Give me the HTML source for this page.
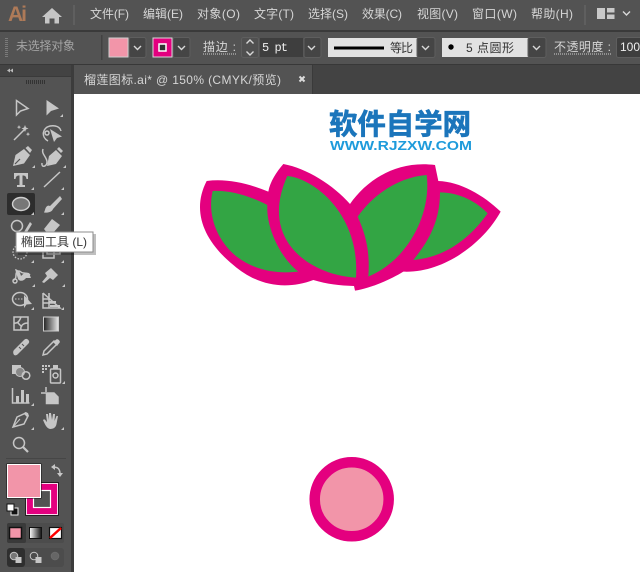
<!DOCTYPE html>
<html><head><meta charset="utf-8">
<style>
html,body{margin:0;padding:0;background:#535353;width:640px;height:572px;overflow:hidden}
svg{display:block}
text{font-family:"Liberation Sans","Noto Sans CJK SC",sans-serif;font-size:12px;fill:#d6d6d6}
.i{fill:none;stroke:#c6c6c6;stroke-width:1.5}
.f{fill:#c6c6c6;stroke:none}
.c{fill:none;stroke:#d8d8d8;stroke-width:1.4}
.d{fill:#454545;stroke:#5e5e5e}
</style></head><body>
<svg width="640" height="572" viewBox="0 0 640 572" xmlns="http://www.w3.org/2000/svg">
<rect width="640" height="572" fill="#535353"/>
<!-- menu bar -->
<text x="8" y="21" style="font-size:21px;font-weight:bold;fill:#ae7a58" textLength="19">Ai</text>
<path class="f" d="M52 8L62 17H59V23.500H54.500V18.500H49.500V23.500H45V17H42Z"/>
<rect x="73" y="5" width="2" height="20" fill="#5f5f5f"/>
<g>
<text x="90" y="18" textLength="39">文件(F)</text>
<text x="143" y="18" textLength="40">编辑(E)</text>
<text x="197" y="18" textLength="43">对象(O)</text>
<text x="254" y="18" textLength="40">文字(T)</text>
<text x="308" y="18" textLength="40">选择(S)</text>
<text x="362" y="18" textLength="40">效果(C)</text>
<text x="417" y="18" textLength="41">视图(V)</text>
<text x="472" y="18" textLength="45">窗口(W)</text>
<text x="531" y="18" textLength="42">帮助(H)</text>
</g>
<rect x="584" y="5" width="2" height="20" fill="#5f5f5f"/>
<path d="M597 8H605V19H597ZM607 8H614.500V12.500H607ZM607 14.500H614.500V19H607Z" fill="#c9c9c9"/>
<path class="c" d="M623 11.500L626.500 15L630 11.500" />
<rect y="30" width="640" height="2" fill="#3a3a3a"/>
<!-- options bar -->
<path d="M6.500 38V57" stroke="#7a7a7a" stroke-width="3" stroke-dasharray="1 1"/>
<text x="16" y="50" textLength="59" style="fill:#a4a4a4">未选择对象</text>
<rect x="101" y="35" width="1.500" height="25" fill="#424242"/>
<rect x="129" y="37.500" width="17" height="20" rx="2" class="d"/>
<rect x="109" y="38" width="19" height="19" fill="#f295a9" stroke="#cfcfcf"/>
<path class="c" d="M134 46L137.500 49.500L141 46"/>
<rect x="173" y="37.500" width="17" height="20" rx="2" class="d"/>
<rect x="153" y="38" width="19" height="19" fill="#e4007f" stroke="#d8d8d8"/>
<rect x="159" y="44" width="7" height="7" fill="#333" stroke="#fff" stroke-width="1.500"/>
<path class="c" d="M178 46L181.500 49.500L185 46"/>
<text x="203" y="51" textLength="33">描边 :</text>
<path d="M203 54H236" stroke="#cfcfcf" stroke-dasharray="1 1"/>
<rect x="241.500" y="37.500" width="17" height="20" rx="2" fill="#505050" stroke="#5e5e5e"/>
<path class="c" d="M246.500 43.500L250 40L253.500 43.500M246.500 51.500L250 55L253.500 51.500"/>
<rect x="260" y="38" width="43" height="19" fill="#3e3e3e"/>
<text x="262" y="51" style="font-family:'Liberation Mono',monospace;fill:#eee" textLength="26">5 pt</text>
<rect x="304" y="37.500" width="17" height="20" rx="2" class="d"/>
<path class="c" d="M308 46L311.500 49.500L315 46"/>
<rect x="328" y="38" width="89" height="19" fill="#e2e2e2"/>
<rect x="334" y="46.500" width="50" height="3" fill="#000"/>
<text x="390" y="52" textLength="23" style="fill:#333">等比</text>
<rect x="417" y="37.500" width="18" height="20" rx="2" class="d"/>
<path class="c" d="M422 46L425.500 49.500L429 46"/>
<rect x="442" y="38" width="86" height="19" fill="#e2e2e2"/>
<circle cx="451" cy="47" r="2.700" fill="#000"/>
<text x="466" y="52" textLength="48" style="fill:#333">5 点圆形</text>
<rect x="528" y="37.500" width="18" height="20" rx="2" class="d"/>
<path class="c" d="M533 46L536.500 49.500L540 46"/>
<text x="554" y="51" textLength="57">不透明度 :</text>
<path d="M554 54H611" stroke="#cfcfcf" stroke-dasharray="1 1"/>
<rect x="616.500" y="37.500" width="30" height="20" rx="2" fill="#3e3e3e" stroke="#5e5e5e"/>
<text x="620" y="51" style="fill:#eee">100%</text>
<rect y="64" width="640" height="1.500" fill="#383838"/>
<!-- tab bar -->
<rect x="73" y="65" width="567" height="29" fill="#434343"/>
<rect x="74" y="65" width="238" height="29" fill="#535353"/>
<rect x="312" y="65" width="1" height="29" fill="#3a3a3a"/>
<text x="84" y="84" textLength="197">榴莲图标.ai*  @ 150% (CMYK/预览)</text>
<path d="M299.500 76.500L304.500 81.500M304.500 76.500L299.500 81.500" stroke="#dcdcdc" stroke-width="2"/>
<!-- canvas -->
<rect x="74" y="94" width="566" height="478" fill="#fff"/>
<!-- tool panel -->
<rect x="71" y="65" width="3" height="507" fill="#3c3c3c"/>
<rect x="0" y="65" width="71" height="11" fill="#434343"/>
<rect x="0" y="76" width="71" height="1" fill="#3a3a3a"/>
<path d="M10 68.500L7 70.500L10 72.500ZM13 68.500L10 70.500L13 72.500Z" fill="#bbb"/>
<path d="M26 82H45" stroke="#333" stroke-width="4" stroke-dasharray="1 1"/>
<rect x="7" y="193" width="28" height="22" rx="2" fill="#2d2d2d"/>
<!-- row 1 -->
<path class="i" d="M16.500 100.500V115L20.500 111L28 108.500Z"/>
<path class="f" d="M46.500 100V115.500L51 111L59 108.500Z"/>
<path class="f" d="M63 114V117H60Z"/>
<!-- row 2 -->
<path class="i" d="M14 140L25 129" stroke-width="2"/>
<path class="f" d="M25 125l1 2.500 2.500 1-2.500 1-1 2.500-1-2.500-2.500-1 2.500-1zM19 125l.6 1.500 1.500.6-1.500.6-.6 1.500-.6-1.500-1.500-.6 1.500-.6zM28 132l.6 1.500 1.500.6-1.500.6-.6 1.500-.6-1.500-1.500-.6 1.500-.6z"/>
<path class="i" d="M48 141C41 137 42 128 50 126C56 125 60 127 61 131"/>
<path class="f" d="M50 129L62 136.500L57 138L54 142Z"/>
<circle cx="47" cy="133" r="2" class="i"/>
<!-- row 3 -->
<path class="f" d="M13 166L15.500 155L24 149L30 155L24 163.500ZM25.500 148L28 146L32 150L30 153Z"/>
<path d="M15 164L20 159" stroke="#535353" stroke-width="1.200"/>
<path class="i" d="M42 163C41 168 47 167 47 162C47 157 41 154 43 149"/>
<path class="f" d="M47 166L49 156L56 150L62 156L56 164ZM57 149L59 147L63 151L61 153Z"/>
<path class="f" d="M35 165v3h-3zM66 165v3h-3z"/>
<!-- row 4 -->
<path class="f" d="M14 173H28V179H26.500C26 176 25 175.500 22.500 175.500V185H25V187H17V185H19.500V175.500C17 175.500 16 176 15.500 179H14Z"/>
<path class="i" d="M44 187L60 172"/>
<path class="f" d="M34 187v3h-3zM64 187v3h-3z"/>
<!-- row 5 -->
<ellipse cx="21" cy="204" rx="8.500" ry="6.500" fill="#777" stroke="#cfcfcf" stroke-width="1.400"/>
<path class="f" d="M34 212v3h-3zM64 212v3h-3z"/>
<path class="f" d="M45 210C46 206 48 205 50 206L60 196L62 199L53 209C52 212 48 213 44 212.500Z"/>
<!-- row 6 -->
<circle cx="17" cy="226" r="5.500" class="i"/>
<path class="f" d="M24 232L30 222L32 224L26 234Z"/>
<path class="f" d="M44 229L52 219L60 225L53 233H47Z"/>
<!-- row 7 -->
<circle cx="20" cy="252" r="7" fill="none" stroke="#c6c6c6" stroke-width="1.300" stroke-dasharray="1.500 1.500"/>
<path class="i" d="M43 247H54V258H43ZM47 243H60V254H47Z" stroke-width="1.200"/>
<path class="f" d="M34 260v3h-3zM64 260v3h-3z"/>
<!-- row 8 -->
<path class="i" d="M13 280C15 280 16 278 16 275C16 271 19 270 21 272C23 274 27 272 30 275"/>
<path class="f" d="M15 269C19 270 20 272 21 276C23 274 25 272 29 273L31 278L26 278C24 281 20 282 18 279Z"/>
<circle cx="15" cy="281" r="2" class="i"/>
<path class="f" d="M42 282L47 276L45 273L51 268L58 275L53 280L50 278L44 283Z"/>
<path class="f" d="M35 284v3h-3zM65 284v3h-3z"/>
<!-- row 9 -->
<ellipse cx="20" cy="299" rx="7.500" ry="6.500" class="i"/>
<path d="M15 299H26" stroke="#c6c6c6" stroke-dasharray="1.500 1.500"/>
<path class="f" d="M24 295L32 304L26.500 304.500L24 308Z"/>
<path class="i" d="M43 293V308H60L43 293M43 299H50M43 303H55M49 293V308" stroke-width="1"/>
<path class="f" d="M49 301H56V303H49ZM50 305H60V307H50Z"/>
<path class="f" d="M34 307v3h-3zM64 307v3h-3z"/>
<!-- row 10 -->
<path class="i" d="M14 317H28V330H14ZM14 323C18 324 20 320 21 317M21 330C20 326 23 323 28 323M18 323L22 327" stroke-width="1"/>
<defs><linearGradient id="g" x1="0" x2="1"><stop offset="0" stop-color="#222"/><stop offset="1" stop-color="#e8e8e8"/></linearGradient>
<linearGradient id="g2" x1="0" x2="1"><stop offset="0" stop-color="#fff"/><stop offset="1" stop-color="#111"/></linearGradient></defs>
<rect x="43.500" y="317" width="15" height="14" fill="url(#g)" stroke="#ccc" stroke-width="1"/>
<!-- row 11 -->
<path class="f" d="M14 350L24 340C26 338 28 339 29 341C29.500 342 29 343 28 344L18 354C16 356 14 355.500 13.500 354C13 352.500 13 351 14 350Z"/>
<path d="M19 347l2 2M22 344l2 2" stroke="#535353"/>
<path class="i" d="M43 355L44 351L54 341L57 344L47 354Z"/>
<path class="f" d="M53 342L57 339L59 340L60 342L57 346Z"/>
<!-- row 12 -->
<rect x="12" y="365" width="9" height="9" fill="#c6c6c6"/>
<circle cx="20" cy="372" r="4.500" fill="#888" stroke="#c6c6c6"/>
<circle cx="26" cy="375.500" r="3.800" class="i" stroke-width="1.200"/>
<path class="f" d="M42 365h2v2h-2zM45 365h2v2h-2zM48 365h2v2h-2zM42 368h2v2h-2zM45 368h2v2h-2zM42 371h2v2h-2z"/>
<rect x="50.500" y="369" width="10" height="14" rx="1" class="i"/>
<path class="f" d="M53 365h5v4h-5z"/>
<circle cx="55.500" cy="375.500" r="2.500" class="i"/>
<path class="f" d="M65 381v3h-3z"/>
<!-- row 13 -->
<path class="i" d="M12.500 388V403H29.500" stroke-width="1.200"/>
<path class="f" d="M16 396h3v7h-3zM21 390h3v13h-3zM26 394h3v9h-3z"/>
<path class="f" d="M34 403v3h-3z"/>
<path class="i" d="M41 393H46M46 387V392" stroke-width="1"/>
<path class="f" d="M47 393H54L58 397V403H47Z"/>
<path class="i" d="M46.500 393H54L58 397V403.500H46.500Z" stroke-width="1"/>
<!-- row 14 -->
<path class="i" d="M13 427L17 417L26 413L28 416L24 424Z"/>
<path d="M13 427L20 419" stroke="#c6c6c6"/>
<path class="f" d="M25 412L28 413L29 416L27 417L24 414Z"/>
<path class="f" d="M34 427v3h-3z"/>
<path class="f" d="M50 429C46 428 45 424 43 420C44 419 45 419 46 421L47 422L46 414H48L49 420V413H51L52 420L53 414H55L54.500 421L56.500 416H58L56.500 424C56 427 54 429 50 429Z"/>
<path class="f" d="M64 427v3h-3z"/>
<!-- row 15 -->
<circle cx="19" cy="443" r="5.500" class="i" stroke-width="1.700"/>
<path d="M23 447L28 452" stroke="#c6c6c6" stroke-width="2.200"/>
<rect x="6" y="458" width="60" height="1" fill="#464646"/>
<!-- swap -->
<path class="i" d="M53 467C58 467 60 469 60 474" stroke-width="1.700"/>
<path class="f" d="M55 464V470L51 467ZM57 473H63L60 477Z"/>
<!-- stroke square -->
<path d="M25 482H59V516H25ZM33.500 490.500V507.500H50.500V490.500Z" fill="#e4007f" fill-rule="evenodd" stroke="none"/>
<rect x="25.500" y="482.500" width="33" height="33" fill="none" stroke="#222" stroke-width="1"/>
<rect x="33.500" y="490.500" width="17" height="17" fill="#535353" stroke="#fff" stroke-width="1.200"/>
<rect x="26.500" y="483.500" width="31" height="31" fill="none" stroke="#fff" stroke-width="1" opacity=".85"/>
<!-- fill square -->
<rect x="7" y="464" width="34" height="34" fill="#f295a9" stroke="#111" stroke-width="1"/>
<rect x="7.500" y="464.500" width="33" height="33" fill="none" stroke="#fff" stroke-width="1"/>
<!-- default -->
<rect x="11" y="508" width="7" height="7" fill="#111" stroke="#eee"/>
<rect x="7" y="504" width="7" height="7" fill="#fff" stroke="#111"/>
<!-- mode row -->
<rect x="7" y="523" width="57" height="20" rx="2" fill="#4c4c4c"/>
<rect x="7" y="523" width="19" height="20" rx="2" fill="#3a3a3a"/>
<rect x="9.500" y="527.500" width="12" height="11" fill="#f295a9" stroke="#111" stroke-width="1.500"/>
<rect x="29.500" y="527.500" width="12" height="11" fill="url(#g2)" stroke="#111" stroke-width="1"/>
<rect x="49.500" y="527.500" width="12" height="11" fill="#fff" stroke="#111" stroke-width="1.200"/>
<path d="M50 538L61 528" stroke="#f00" stroke-width="2.500"/>
<!-- draw row -->
<rect x="7" y="548" width="57" height="19" rx="3" fill="#4c4c4c"/>
<rect x="7" y="548" width="18" height="19" rx="3" fill="#2f2f2f"/>
<circle cx="14" cy="556" r="3.800" fill="#777" stroke="#c6c6c6"/>
<rect x="15.500" y="557" width="6" height="6" fill="#c6c6c6"/>
<circle cx="34" cy="556" r="3.800" fill="none" stroke="#c6c6c6"/>
<rect x="35.500" y="557" width="6" height="6" fill="#c6c6c6"/>
<circle cx="55" cy="556" r="3.800" fill="#666" stroke="#6c6c6c"/>
<!-- tooltip -->
<rect x="18" y="234" width="78" height="21" fill="#000" opacity=".25"/>
<rect x="16" y="232" width="77" height="20" fill="#fff" stroke="#8c8c8c"/>
<text x="21" y="246" textLength="66" style="fill:#333">椭圆工具 (L)</text>
<!-- logo -->
<text x="329" y="134" textLength="142" lengthAdjust="spacingAndGlyphs" style="font-size:28.500px;font-weight:bold;fill:#1b75bb;stroke:#1b75bb;stroke-width:.7px;font-family:'Noto Sans CJK SC',sans-serif">软件自学网</text>
<text x="330" y="150" textLength="142" lengthAdjust="spacingAndGlyphs" style="font-size:12.500px;font-weight:bold;fill:#1e9bdb">WWW.RJZXW.COM</text>
<!-- leaves -->
<g transform="translate(190 100) scale(.33333)">
<path fill="#e4007f" d="M50 243C110 235 175 250 235 275C240 245 260 215 280 192C350 205 430 255 480 312C530 240 620 180 735 195L745 243C810 245 880 285 932 335C880 430 760 520 640 515C600 540 540 565 495 572L492 558C450 557 410 552 370 540C290 570 205 560 130 495C50 430 0 340 50 243Z"/>
<g fill="#33a544">
<path d="M68 273C120 270 180 288 232 315C228 380 268 470 325 515C260 522 195 512 140 470C85 425 50 350 68 273Z"/>
<path d="M292 228C370 235 510 340 498 533C360 525 205 420 292 228Z"/>
<path d="M710 225C725 340 655 480 535 530C540 460 530 410 503 350C560 270 640 230 710 225Z"/>
<path d="M750 277C810 278 860 305 893 340C850 400 780 470 670 480C710 430 750 370 750 277Z"/>
</g>
</g>
<!-- circle -->
<circle cx="351.700" cy="499.300" r="37" fill="#f295a9" stroke="#e4007f" stroke-width="10.500"/>
</svg>
</body></html>
